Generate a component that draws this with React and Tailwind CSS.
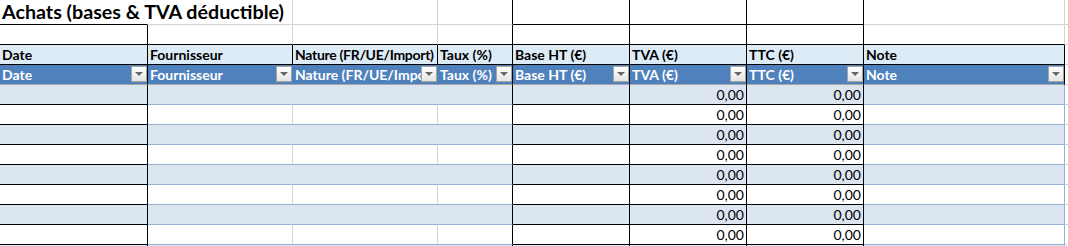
import React from "react";

const WC = [
  "w-[148px]",
  "w-[145px]",
  "w-[145px]",
  "w-[75px]",
  "w-[117px]",
  "w-[117px]",
  "w-[117px]",
  "w-[201px]",
];

const headers = [
  "Date",
  "Fournisseur",
  "Nature (FR/UE/Import)",
  "Taux (%)",
  "Base HT (€)",
  "TVA (€)",
  "TTC (€)",
  "Note",
];

function Cell({ i, className = "", children }) {
  return (
    <div
      className={`${WC[i]} shrink-0 h-full border-r border-b overflow-hidden relative ${className}`}
    >
      {children}
    </div>
  );
}

function Filler({ className = "" }) {
  return <div className={`flex-1 h-full border-b ${className}`} />;
}

function Dropdown() {
  return (
    <div className="absolute right-0 top-[1px] w-[16px] h-[16px] border border-[#a6a6a6] bg-gradient-to-b from-white to-[#e4e4e4] flex items-center justify-center">
      <div className="w-0 h-0 border-l-[4px] border-r-[4px] border-t-[4px] border-l-transparent border-r-transparent border-t-[#666666]" />
    </div>
  );
}

export default function App() {
  const topBorders = [
    "border-r-transparent border-b-black",
    "border-r-[#d4d4d4] border-b-[#d4d4d4]",
    "border-r-[#d4d4d4] border-b-[#d4d4d4]",
    "border-r-black border-b-[#d4d4d4]",
    "border-r-black border-b-black",
    "border-r-black border-b-black",
    "border-r-black border-b-black",
    "border-r-[#d4d4d4] border-b-[#d4d4d4]",
  ];
  const row2Borders = [
    "border-r-black border-b-black",
    "border-r-[#d4d4d4] border-b-black",
    "border-r-[#d4d4d4] border-b-black",
    "border-r-black border-b-black",
    "border-r-black border-b-black",
    "border-r-black border-b-black",
    "border-r-black border-b-black",
    "border-r-[#d4d4d4] border-b-black",
  ];
  const blueBorders = [
    "border-r-black",
    "border-r-[#4f81bd]",
    "border-r-[#4f81bd]",
    "border-r-black",
    "border-r-black",
    "border-r-black",
    "border-r-black",
    "border-r-black",
  ];
  const rows = Array.from({ length: 9 });

  return (
    <div className="w-[1068px] h-[246px] overflow-hidden bg-white font-['Lato',sans-serif] text-black">
      {/* Row 1 : title */}
      <div className="flex h-[25px]">
        {topBorders.map((b, i) => (
          <Cell key={i} i={i} className={`${b} ${i === 0 ? "overflow-visible z-10" : ""}`}>
            {i === 0 && (
              <span className="absolute left-[2px] top-[0px] whitespace-nowrap text-[19.7px] font-bold leading-[24px]">
                Achats (bases &amp; TVA déductible)
              </span>
            )}
          </Cell>
        ))}
        <Filler className="border-b-[#d4d4d4]" />
      </div>
      {/* Row 2 : empty */}
      <div className="flex h-[20px]">
        {row2Borders.map((b, i) => (
          <Cell key={i} i={i} className={b} />
        ))}
        <Filler className="border-b-[#d4d4d4]" />
      </div>
      {/* Row 3 : light header */}
      <div className="flex h-[20px]">
        {headers.map((h, i) => (
          <Cell
            key={i}
            i={i}
            className="border-r-black border-b-black bg-[#ddebf7] text-[14px] font-bold leading-[19px] pl-[2px] whitespace-nowrap flex items-end"
          >
            <span className={i === 2 ? "tracking-[-0.3px]" : ""}>{h}</span>
          </Cell>
        ))}
        <Filler className="border-b-[#d4d4d4]" />
      </div>
      {/* Row 4 : table header with filters */}
      <div className="flex h-[20px]">
        {headers.map((h, i) => (
          <Cell
            key={i}
            i={i}
            className={`${blueBorders[i]} border-b-[#a6a6a6] bg-[#4f81bd] text-white text-[14px] font-bold leading-[19px] pl-[2px] whitespace-nowrap flex items-end`}
          >
            <span className="block overflow-hidden pr-[16px] w-full">{h}</span>
            <Dropdown />
          </Cell>
        ))}
        <Filler className="border-b-[#d4d4d4]" />
      </div>
      {/* Data rows */}
      {rows.map((_, r) => {
        const band = r % 2 === 0;
        const bg = band ? "bg-[#dce6f1]" : "bg-white";
        const gridR = band ? "border-r-[#dce6f1]" : "border-r-[#d4d4d4]";
        const cls = [
          `${bg} border-r-black border-b-black`,
          `${bg} ${gridR} border-b-[#95b3d7]`,
          `${bg} ${gridR} border-b-[#95b3d7]`,
          `${bg} border-r-black border-b-[#95b3d7]`,
          `${bg} border-r-black border-b-black`,
          `${bg} border-r-black border-b-black`,
          `${bg} border-r-black border-b-black`,
          `${bg} border-r-[#95b3d7] border-b-[#95b3d7]`,
        ];
        return (
          <div key={r} className="flex h-[20px]">
            {cls.map((c, i) => (
              <Cell
                key={i}
                i={i}
                className={`${c} text-[14px] leading-[19px] flex items-end justify-end pr-[2px]`}
              >
                {(i === 5 || i === 6) && <span>0,00</span>}
              </Cell>
            ))}
            <Filler className="border-b-[#d4d4d4]" />
          </div>
        );
      })}
    </div>
  );
}
